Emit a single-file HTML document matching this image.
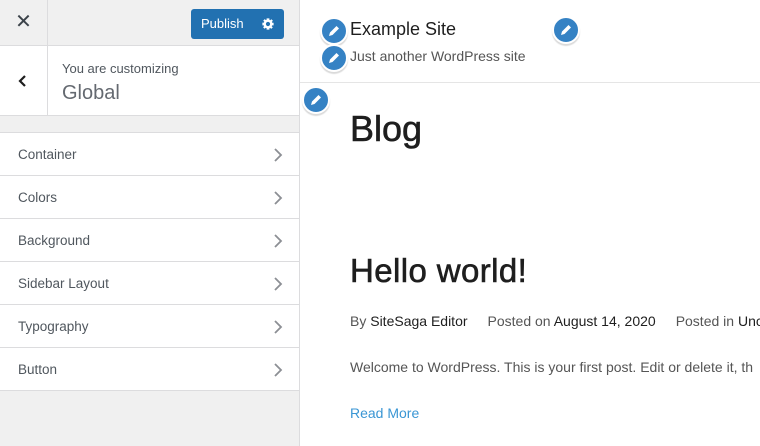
<!DOCTYPE html>
<html><head><meta charset="utf-8"><style>
*{margin:0;padding:0;box-sizing:border-box}
html,body{width:760px;height:446px;overflow:hidden}
body{background:#fff;font-family:"Liberation Sans",sans-serif;position:relative}
#side{position:absolute;left:0;top:0;width:300px;height:446px;background:#f0f0f0;border-right:1px solid #dcdcde}
.hdr{position:absolute;left:0;top:0;width:299px;height:46px;border-bottom:1px solid #dcdcde}
.close{position:absolute;left:0;top:0;width:48px;height:45px;border-right:1px solid #dcdcde;text-align:center;line-height:45px;font-size:20px;color:#3c434a}
.pub{position:absolute;left:191px;top:9px;width:93px;height:30px;background:#2271b1;border-radius:3px;color:#fff;font-size:13px}
.pub span{position:absolute;left:10px;top:7px}
.info{position:absolute;left:0;top:46px;width:299px;height:70px;background:#fff;border-bottom:1px solid #dcdcde}
.back{position:absolute;left:0;top:0;width:48px;height:70px;border-right:1px solid #dcdcde}
.sm{position:absolute;left:62px;top:15px;font-size:13px;color:#50575e}
.big{position:absolute;left:62px;top:36px;font-size:20px;color:#646970}
.list{position:absolute;left:0;top:132px;width:299px;border-top:1px solid #dcdcde}
.it{height:43px;background:#fff;border-bottom:1px solid #dcdcde;position:relative;font-size:13.5px;color:#50575e;padding:14px 18px}
.it svg{position:absolute;right:16px;top:15px}
.ed{position:absolute;width:28px;height:28px;border-radius:50%;background:#3582c4;border:2px solid #fff;box-shadow:0 2px 1px rgba(0,0,0,.15)}
.ed svg{position:absolute;left:6px;top:6px}
.t{position:absolute;white-space:nowrap;color:#1e1e1e}
</style></head><body>
<div id="side">
 <div class="hdr"><div class="close">✕</div>
  <div class="pub"><span>Publish</span>
   <svg style="position:absolute;left:70px;top:8px" width="14" height="14" viewBox="0 0 20 20"><path fill="#fff" d="M18 12h-2.18a5.96 5.96 0 0 1-.52 1.26l1.54 1.54-2.24 2.24-1.54-1.54A5.9 5.9 0 0 1 12 16.020V18H8v-2.18a5.96 5.96 0 0 1-1.26-.52L5.2 16.84 2.960 14.6 4.5 13.06A5.9 5.9 0 0 1 3.98 12H2V8h2.18c.12-.44.3-.86.52-1.26L3.16 5.2 5.4 2.96 6.94 4.5A5.9 5.9 0 0 1 8 3.98V2h4v2.18c.44.12.86.3 1.26.52l1.54-1.54 2.24 2.24-1.54 1.54c.22.4.4.82.52 1.26H18v4zm-8 1a3 3 0 1 0 0-6 3 3 0 0 0 0 6z"/></svg></div></div>
 <div class="info"><div class="back"><svg style="position:absolute;left:18px;top:28px" width="10" height="14" viewBox="0 0 10 14"><path d="M7 2L2 7l5 5" stroke="#1e1e1e" stroke-width="2.2" fill="none"/></svg></div>
  <div class="sm">You are customizing</div><div class="big">Global</div></div>
 <div class="list">
  <div class="it">Container<svg width="10" height="14" viewBox="0 0 10 14"><path d="M2 1l6 6-6 6" stroke="#8c8f94" stroke-width="1.8" fill="none"/></svg></div>
  <div class="it">Colors<svg width="10" height="14" viewBox="0 0 10 14"><path d="M2 1l6 6-6 6" stroke="#8c8f94" stroke-width="1.8" fill="none"/></svg></div>
  <div class="it">Background<svg width="10" height="14" viewBox="0 0 10 14"><path d="M2 1l6 6-6 6" stroke="#8c8f94" stroke-width="1.8" fill="none"/></svg></div>
  <div class="it">Sidebar Layout<svg width="10" height="14" viewBox="0 0 10 14"><path d="M2 1l6 6-6 6" stroke="#8c8f94" stroke-width="1.8" fill="none"/></svg></div>
  <div class="it">Typography<svg width="10" height="14" viewBox="0 0 10 14"><path d="M2 1l6 6-6 6" stroke="#8c8f94" stroke-width="1.8" fill="none"/></svg></div>
  <div class="it">Button<svg width="10" height="14" viewBox="0 0 10 14"><path d="M2 1l6 6-6 6" stroke="#8c8f94" stroke-width="1.8" fill="none"/></svg></div>
 </div>
</div>
<div style="position:absolute;left:300px;top:82px;width:460px;height:1px;background:#e5e5e5"></div>
<div class="t" style="left:350px;top:19px;font-size:18px">Example Site</div>
<div class="t" style="left:350px;top:48px;font-size:14px;color:#555">Just another WordPress site</div>
<div class="t" style="left:350px;top:108px;font-size:36px;-webkit-text-stroke:.6px #1e1e1e">Blog</div>
<div class="t" style="left:350px;top:252px;font-size:33px;-webkit-text-stroke:.6px #1e1e1e;letter-spacing:.4px">Hello world!</div>
<div class="t" style="left:350px;top:313px;font-size:14px;color:#555">By <span style="color:#1e1e1e">SiteSaga Editor</span><span style="margin-left:20px">Posted on </span><span style="color:#1e1e1e">August 14, 2020</span><span style="margin-left:20px">Posted in </span><span style="color:#1e1e1e">Unc</span></div>
<div class="t" style="left:350px;top:359px;font-size:14px;color:#555">Welcome to WordPress. This is your first post. Edit or delete it, th</div>
<div class="t" style="left:350px;top:405px;font-size:14px;color:#3a96d4">Read More</div>
<div class="ed" style="left:320px;top:17px"><svg width="12" height="12" viewBox="0 0 12 12"><path fill="#fff" d="M8.5 1l2.5 2.5-6.5 6.5-3.5 1 1-3.5z"/></svg></div>
<div class="ed" style="left:320px;top:44px"><svg width="12" height="12" viewBox="0 0 12 12"><path fill="#fff" d="M8.5 1l2.5 2.5-6.5 6.5-3.5 1 1-3.5z"/></svg></div>
<div class="ed" style="left:552px;top:16px"><svg width="12" height="12" viewBox="0 0 12 12"><path fill="#fff" d="M8.5 1l2.5 2.5-6.5 6.5-3.5 1 1-3.5z"/></svg></div>
<div class="ed" style="left:302px;top:86px"><svg width="12" height="12" viewBox="0 0 12 12"><path fill="#fff" d="M8.5 1l2.5 2.5-6.5 6.5-3.5 1 1-3.5z"/></svg></div>
</body></html>
